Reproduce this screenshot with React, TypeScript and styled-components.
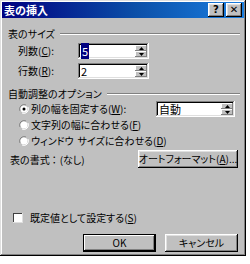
import React from "react";
import styled, { createGlobalStyle } from "styled-components";

const Global = createGlobalStyle`
  html, body { margin: 0; padding: 0; background: #ffffff; }
  body { font-family: "Noto Sans CJK JP", "Noto Sans", sans-serif; }
  * { box-sizing: border-box; }
`;

const Window = styled.div`
  width: 246px;
  height: 256px;
  background: #c0c0c0;
  padding: 2px;
  display: flex;
  flex-direction: column;
  box-shadow: inset -1px -1px #000000, inset 1px 1px #dfdfdf,
    inset -2px -2px #808080, inset 2px 2px #ffffff;
  font-family: "Noto Sans CJK JP", sans-serif;
  font-feature-settings: "palt";
  font-size: 10px;
  color: #000;
`;

const TitleBar = styled.div`
  height: 16px;
  display: flex;
  align-items: center;
  padding: 0 2px 0 2px;
  background: linear-gradient(90deg, #000080 0%, #0b4fa8 55%, #1a7ee0 100%);
`;

const Title = styled.div`
  flex: 1;
  color: #ffffff;
  font-weight: bold;
  font-size: 11px;
  line-height: 14px;
  font-feature-settings: normal;
`;

const TitleButtons = styled.div`
  display: flex;
  gap: 2px;
`;

const TitleButton = styled.div`
  width: 16px;
  height: 14px;
  background: #c0c0c0;
  display: flex;
  align-items: center;
  justify-content: center;
  font-family: "DejaVu Sans", sans-serif;
  font-weight: bold;
  font-size: 10px;
  line-height: 10px;
  box-shadow: inset -1px -1px #000000, inset 1px 1px #ffffff,
    inset -2px -2px #808080, inset 2px 2px #dfdfdf;
`;

const Content = styled.div`
  flex: 1;
  display: flex;
  flex-direction: column;
  padding: 0 6px 0 6px;
`;

const GroupHeader = styled.div<{ $mt: number }>`
  margin-top: ${(p) => p.$mt}px;
  height: 12px;
  display: flex;
  align-items: center;
  gap: 5px;
  line-height: 12px;
  white-space: nowrap;
`;

const Etched = styled.div`
  flex: 1;
  height: 2px;
  border-top: 1px solid #808080;
  border-bottom: 1px solid #ffffff;
  margin-right: -2px;
`;

const FieldRow = styled.div<{ $mt: number }>`
  margin-top: ${(p) => p.$mt}px;
  height: 16px;
  display: flex;
  align-items: center;
  padding-left: 10px;
`;

const FieldLabel = styled.div`
  width: 60px;
  white-space: nowrap;
  line-height: 12px;
`;

const SpinBox = styled.div<{ $w: number }>`
  width: ${(p) => p.$w}px;
  height: 16px;
  background: #ffffff;
  display: flex;
  align-items: center;
  padding: 2px;
  box-shadow: inset -1px -1px #ffffff, inset 1px 1px #808080,
    inset -2px -2px #dfdfdf, inset 2px 2px #000000;
`;

const SpinValue = styled.div`
  flex: 1;
  padding-left: 1px;
  line-height: 12px;
  font-size: 11px;
`;

const Selected = styled.span`
  background: #000080;
  color: #ffffff;
  padding: 0 1px;
`;

const SpinButtons = styled.div`
  width: 12px;
  height: 12px;
  display: flex;
  flex-direction: column;
`;

const SpinBtn = styled.div`
  flex: 1;
  background: #c0c0c0;
  display: flex;
  align-items: center;
  justify-content: center;
  box-shadow: inset -1px -1px #808080, inset 1px 1px #ffffff;
`;

const RadioRow = styled.div<{ $mt: number }>`
  margin-top: ${(p) => p.$mt}px;
  height: 16px;
  display: flex;
  align-items: center;
  padding-left: 11px;
  white-space: nowrap;
`;

const RadioText = styled.div`
  margin-left: 2px;
  flex: 1;
  line-height: 12px;
`;

const FormatRow = styled.div`
  margin-top: 1px;
  height: 18px;
  display: flex;
  align-items: center;
  justify-content: space-between;
  white-space: nowrap;
  padding-left: 2px;
`;

const Colon = styled.span`
  padding: 0 3px 0 2px;
`;

const Gap = styled.span`
  display: inline-block;
  width: 4px;
`;

const PushButton = styled.div<{ $w: number; $default?: boolean }>`
  width: ${(p) => p.$w}px;
  height: 18px;
  background: #c0c0c0;
  display: flex;
  align-items: center;
  justify-content: center;
  white-space: nowrap;
  line-height: 12px;
  box-shadow: ${(p) =>
    p.$default
      ? "inset -1px -1px #000000, inset 1px 1px #000000, inset -2px -2px #000000, inset 2px 2px #ffffff, inset -3px -3px #808080"
      : "inset -1px -1px #000000, inset 1px 1px #ffffff, inset -2px -2px #808080, inset 2px 2px #dfdfdf"};
`;

const CheckRow = styled.div`
  margin-top: 43px;
  height: 14px;
  display: flex;
  align-items: center;
  padding-left: 5px;
  gap: 7px;
  white-space: nowrap;
  line-height: 12px;
`;

const CheckBox = styled.div`
  width: 10px;
  height: 10px;
  background: #ffffff;
  box-shadow: inset -1px -1px #dfdfdf, inset 1px 1px #404040;
`;

const ButtonRow = styled.div`
  margin-top: 9px;
  display: flex;
  justify-content: flex-end;
  gap: 9px;
`;

const Arrow = ({ up }: { up?: boolean }) => (
  <svg width="5" height="3" viewBox="0 0 5 3">
    <polygon points={up ? "2.5,0 5,3 0,3" : "0,0 5,0 2.5,3"} fill="#000" />
  </svg>
);

const Spin = ({ w, children }: { w: number; children: React.ReactNode }) => (
  <SpinBox $w={w}>
    <SpinValue>{children}</SpinValue>
    <SpinButtons>
      <SpinBtn>
        <Arrow up />
      </SpinBtn>
      <SpinBtn>
        <Arrow />
      </SpinBtn>
    </SpinButtons>
  </SpinBox>
);

const Radio = ({ checked }: { checked?: boolean }) => (
  <svg width="10" height="10" viewBox="0 0 10 10">
    <path d="M1,7 A4.5,4.5 0 0 1 7,1" stroke="#808080" fill="none" />
    <path d="M3,9 A4.5,4.5 0 0 0 9,3" stroke="#ffffff" fill="none" />
    <circle cx="5" cy="5" r="3.5" fill="#ffffff" />
    {checked && <circle cx="5" cy="5" r="1.5" fill="#000" />}
  </svg>
);

export default function App() {
  return (
    <>
      <Global />
      <Window>
        <TitleBar>
          <Title>表の挿入</Title>
          <TitleButtons>
            <TitleButton>?</TitleButton>
            <TitleButton>✕</TitleButton>
          </TitleButtons>
        </TitleBar>
        <Content>
          <GroupHeader $mt={10}>
            表のサイズ
            <Etched />
          </GroupHeader>
          <FieldRow $mt={3}>
            <FieldLabel>
              列数(<u>C</u>):
            </FieldLabel>
            <Spin w={71}>
              <Selected>5</Selected>
            </Spin>
          </FieldRow>
          <FieldRow $mt={4}>
            <FieldLabel>
              行数(<u>R</u>):
            </FieldLabel>
            <Spin w={71}>2</Spin>
          </FieldRow>
          <GroupHeader $mt={9}>
            自動調整のオプション
            <Etched />
          </GroupHeader>
          <RadioRow $mt={1}>
            <Radio checked />
            <RadioText>
              列の幅を固定する(<u>W</u>):
            </RadioText>
            <Spin w={79}>自動</Spin>
            <span style={{ width: 3 }} />
          </RadioRow>
          <RadioRow $mt={0}>
            <Radio />
            <RadioText>
              文字列の幅に合わせる(<u>F</u>)
            </RadioText>
          </RadioRow>
          <RadioRow $mt={0}>
            <Radio />
            <RadioText>
              ウィンドウ<Gap />サイズに合わせる(<u>D</u>)
            </RadioText>
          </RadioRow>
          <FormatRow>
            <span>
              表の書式<Colon>：</Colon>(なし)
            </span>
            <PushButton $w={100}>
              オートフォーマット(<u>A</u>)...
            </PushButton>
          </FormatRow>
          <CheckRow>
            <CheckBox />
            <span>
              既定値として設定する(<u>S</u>)
            </span>
          </CheckRow>
          <ButtonRow>
            <PushButton $w={73} $default>
              OK
            </PushButton>
            <PushButton $w={73}>キャンセル</PushButton>
          </ButtonRow>
        </Content>
      </Window>
    </>
  );
}
